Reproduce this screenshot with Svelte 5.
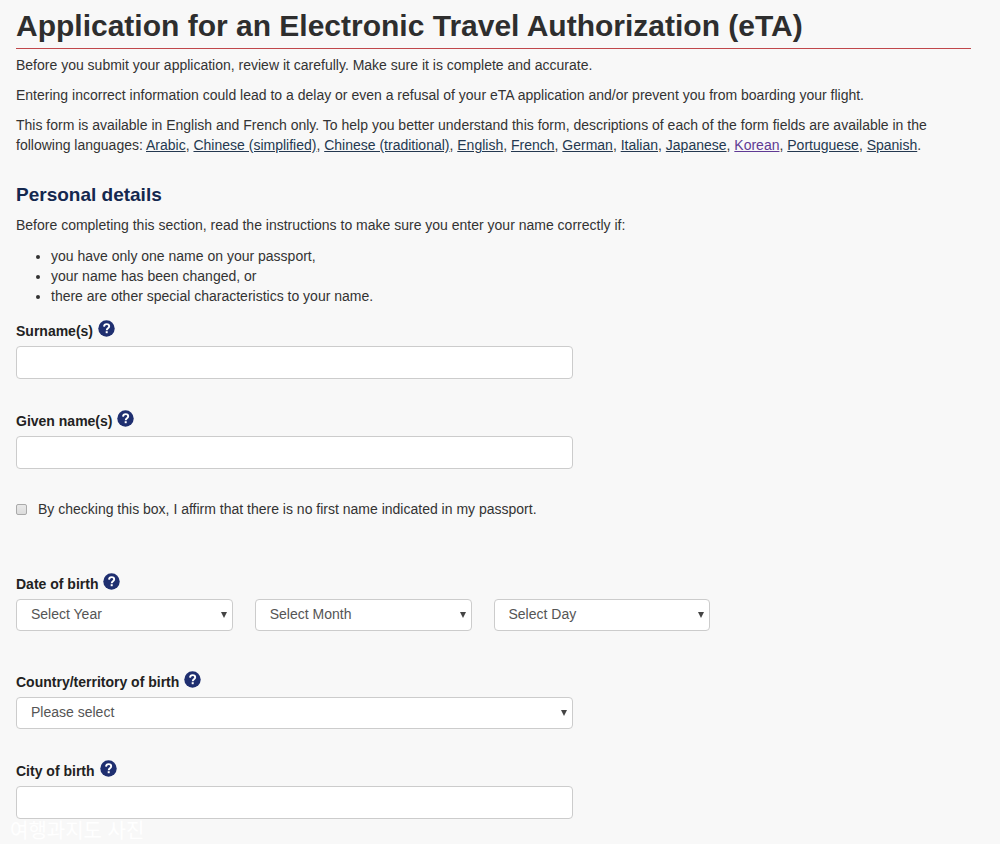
<script lang="ts">
  interface Language {
    name: string;
    visited?: boolean;
  }

  const languages: Language[] = [
    { name: 'Arabic' },
    { name: 'Chinese (simplified)' },
    { name: 'Chinese (traditional)' },
    { name: 'English' },
    { name: 'French' },
    { name: 'German' },
    { name: 'Italian' },
    { name: 'Japanese' },
    { name: 'Korean', visited: true },
    { name: 'Portuguese' },
    { name: 'Spanish' }
  ];

  const dateParts = [
    { id: 'year', label: 'Select Year' },
    { id: 'month', label: 'Select Month' },
    { id: 'day', label: 'Select Day' }
  ];

  let surname = $state('');
  let givenName = $state('');
  let noFirstName = $state(false);
  let city = $state('');
</script>

{#snippet help(topic: string)}
  <button type="button" class="help" aria-label="Help: {topic}">
    <svg viewBox="0 0 17 17" width="17" height="17" aria-hidden="true">
      <circle cx="8.5" cy="8.5" r="8.2" fill="#1f2f70" />
      <path d="M6 6.6C6.1 4.9 7.1 4.1 8.6 4.1c1.6 0 2.6.9 2.6 2.2 0 2-2.5 1.8-2.5 3.9" fill="none" stroke="#fff" stroke-width="1.9" />
      <rect x="7.7" y="11.2" width="2" height="2" fill="#fff" />
    </svg>
  </button>
{/snippet}

<main>
  <h1>Application for an Electronic Travel Authorization (eTA)</h1>
  <p>Before you submit your application, review it carefully. Make sure it is complete and accurate.</p>
  <p>Entering incorrect information could lead to a delay or even a refusal of your eTA application and/or prevent you from boarding your flight.</p>
  <p>
    This form is available in English and French only. To help you better understand this form, descriptions of each of the form fields are available in the following languages:
    {#each languages as language, i}<a href="#{language.name}" class:visited={language.visited}>{language.name}</a>{i < languages.length - 1 ? ', ' : '.'}{/each}
  </p>

  <form>
    <h2>Personal details</h2>
    <p>Before completing this section, read the instructions to make sure you enter your name correctly if:</p>
    <ul>
      <li>you have only one name on your passport,</li>
      <li>your name has been changed, or</li>
      <li>there are other special characteristics to your name.</li>
    </ul>

    <div class="form-group">
      <div class="label-row">
        <label for="surname">Surname(s)</label>
        {@render help('Surname(s)')}
      </div>
      <input type="text" id="surname" class="form-control" bind:value={surname} />
    </div>

    <div class="form-group">
      <div class="label-row">
        <label for="given-name">Given name(s)</label>
        {@render help('Given name(s)')}
      </div>
      <input type="text" id="given-name" class="form-control" bind:value={givenName} />
    </div>

    <div class="checkbox">
      <input type="checkbox" id="no-first-name" bind:checked={noFirstName} />
      <label for="no-first-name">By checking this box, I affirm that there is no first name indicated in my passport.</label>
    </div>

    <div class="form-group date">
      <div class="label-row">
        <label for="year">Date of birth</label>
        {@render help('Date of birth')}
      </div>
      <div class="date-row">
        {#each dateParts as part}
          <div class="date-col">
            <div class="select">
              <select id={part.id} class="form-control" aria-label={part.label}>
                <option>{part.label}</option>
              </select>
            </div>
          </div>
        {/each}
      </div>
    </div>

    <div class="form-group">
      <div class="label-row">
        <label for="country">Country/territory of birth</label>
        {@render help('Country/territory of birth')}
      </div>
      <div class="select wide">
        <select id="country" class="form-control">
          <option>Please select</option>
        </select>
      </div>
    </div>

    <div class="form-group last">
      <div class="label-row">
        <label for="city">City of birth</label>
        {@render help('City of birth')}
      </div>
      <input type="text" id="city" class="form-control" bind:value={city} />
    </div>
  </form>
  <span class="watermark">여행과지도 사진</span>
</main>

<style>
  :global(body) {
    margin: 0;
    background: #f8f8f8;
  }
  main {
    position: relative;
    padding: 5px 29px 24px 16px;
    color: #333;
    font-family: "Liberation Sans", "Noto Sans CJK KR", Arial, sans-serif;
    font-size: 14px;
    line-height: 20px;
  }
  h1 {
    margin: 0 0 6px;
    padding-bottom: 1px;
    border-bottom: 1px solid #c0474b;
    color: #2e2e2e;
    font-size: 30px;
    line-height: 42px;
  }
  h2 {
    margin: 28px 0 8px;
    color: #14284f;
    font-size: 19px;
    line-height: 24px;
  }
  p {
    margin: 0 0 10px;
  }
  ul {
    margin: 11px 0 14px;
    padding-left: 35px;
  }
  a {
    color: #243850;
  }
  a.visited {
    color: #5f3a94;
  }
  .form-group {
    margin-bottom: 31px;
  }
  .form-group.date {
    margin-bottom: 40px;
  }
  .form-group.last {
    margin-bottom: 0;
  }
  .label-row {
    display: flex;
    align-items: flex-start;
    gap: 5px;
    height: 26px;
  }
  .label-row label {
    padding-top: 1px;
    color: #222;
    font-weight: bold;
  }
  .help {
    display: flex;
    padding: 0;
    border: 0;
    background: none;
    cursor: pointer;
  }
  .form-control {
    display: block;
    box-sizing: border-box;
    width: calc(100% * 7 / 12);
    height: 33px;
    padding: 4px 14px 6px;
    border: 1px solid #ccc;
    border-radius: 4px;
    background: #fff;
    color: #555;
    font: inherit;
  }
  .checkbox {
    display: flex;
    align-items: center;
    gap: 11px;
    height: 18px;
    margin-bottom: 55px;
  }
  .checkbox input {
    appearance: none;
    box-sizing: border-box;
    width: 11px;
    height: 11px;
    margin: 0;
    border: 1px solid #aaa;
    border-radius: 2px;
    background: linear-gradient(#e9e9e9, #dcdcdc);
  }
  .checkbox input:checked {
    background: #1f2f70;
  }
  .date-row {
    display: flex;
  }
  .date-col {
    box-sizing: border-box;
    width: 25%;
    padding-right: 22px;
  }
  .select {
    position: relative;
  }
  .select.wide {
    width: calc(100% * 7 / 12);
  }
  .select select {
    width: 100%;
    height: 32px;
    appearance: none;
  }
  .select::after {
    content: "";
    position: absolute;
    top: 13px;
    right: 6px;
    border: 3px solid transparent;
    border-top: 6px solid #444;
    border-bottom: 0;
    pointer-events: none;
  }
  .watermark {
    position: absolute;
    bottom: 0;
    left: 10px;
    color: #fff;
    font-size: 20px;
    line-height: 24px;
    pointer-events: none;
  }
</style>
